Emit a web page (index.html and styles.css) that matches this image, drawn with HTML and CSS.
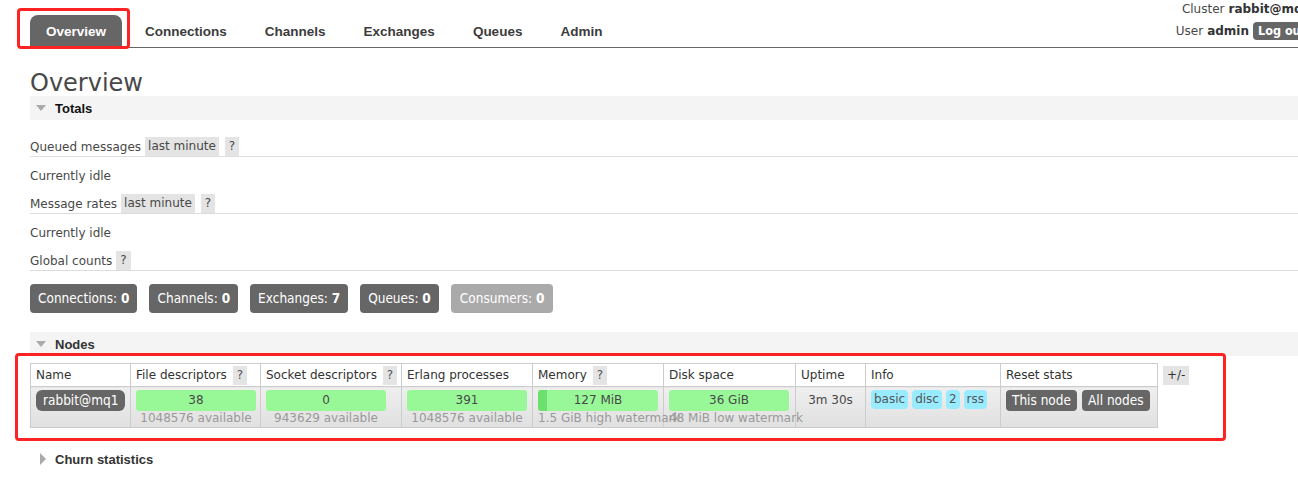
FILE: index.html
```html
<!DOCTYPE html>
<html lang="en">
<head>
<meta charset="utf-8">
<title>RabbitMQ Management</title>
<link rel="stylesheet" href="styles.css">
</head>
<body>
<div class="page">
  <header class="top">
    <nav class="tabs">
      <a class="tab active">Overview</a>
      <a class="tab">Connections</a>
      <a class="tab">Channels</a>
      <a class="tab">Exchanges</a>
      <a class="tab">Queues</a>
      <a class="tab">Admin</a>
    </nav>
    <div class="login">
      <div class="login-line">Cluster <b class="strong">rabbit@mq1</b></div>
      <div class="login-line second">User <b class="strong">admin</b> <span class="logout">Log out</span></div>
    </div>
  </header>

  <main class="main">
    <h1 class="title">Overview</h1>

    <section class="section">
      <h2 class="section-head"><span class="tri-down"></span>Totals</h2>
      <div class="stat-row first">Queued messages <span class="tag">last minute</span><span class="help">?</span></div>
      <p class="idle">Currently idle</p>
      <div class="stat-row">Message rates <span class="tag">last minute</span><span class="help">?</span></div>
      <p class="idle">Currently idle</p>
      <div class="stat-row">Global counts <span class="help near">?</span></div>
      <div class="counts">
        <span class="count">Connections: <b>0</b></span>
        <span class="count">Channels: <b>0</b></span>
        <span class="count">Exchanges: <b>7</b></span>
        <span class="count">Queues: <b>0</b></span>
        <span class="count dim">Consumers: <b>0</b></span>
      </div>
    </section>

    <section class="section nodes">
      <h2 class="section-head"><span class="tri-down"></span>Nodes</h2>
      <div class="nodes-wrap">
        <table class="nodes-table">
          <thead>
            <tr>
              <th class="c-name">Name</th>
              <th class="c-fd">File descriptors <span class="help th-help">?</span></th>
              <th class="c-sd">Socket descriptors <span class="help th-help">?</span></th>
              <th class="c-ep">Erlang processes</th>
              <th class="c-mem">Memory <span class="help th-help">?</span></th>
              <th class="c-disk">Disk space</th>
              <th class="c-up">Uptime</th>
              <th class="c-info">Info</th>
              <th class="c-reset">Reset stats</th>
            </tr>
          </thead>
          <tbody>
            <tr>
              <td><span class="node-name">rabbit@mq1</span></td>
              <td><div class="bar">38</div><div class="sub">1048576 available</div></td>
              <td><div class="bar">0</div><div class="sub">943629 available</div></td>
              <td><div class="bar">391</div><div class="sub">1048576 available</div></td>
              <td><div class="bar bar-mem">127 MiB</div><div class="sub">1.5 GiB high watermark</div></td>
              <td><div class="bar">36 GiB</div><div class="sub">48 MiB low watermark</div></td>
              <td class="uptime">3m 30s</td>
              <td><span class="info-tag">basic</span><span class="info-tag">disc</span><span class="info-tag">2</span><span class="info-tag">rss</span></td>
              <td><span class="btn">This node</span><span class="btn">All nodes</span></td>
            </tr>
          </tbody>
        </table>
        <span class="plusminus">+/-</span>
      </div>
    </section>

    <h2 class="section-head plain"><span class="tri-right"></span>Churn statistics</h2>
  </main>

  <div class="redbox redbox-tab"></div>
  <div class="redbox redbox-nodes"></div>
</div>
</body>
</html>
```

FILE: styles.css
```css
html, body {
  margin: 0;
  padding: 0;
  overflow: hidden;
  background: #fff;
}

body {
  font-family: "DejaVu Sans", Verdana, sans-serif;
  font-size: 12px;
  color: #484848;
}

.page {
  width: 1311px;
  position: relative;
  min-height: 479px;
}

/* ---------- header ---------- */
.top {
  display: flex;
  margin-left: 30px;
  height: 47px;
  border-bottom: 1px solid #666;
}

.tabs {
  display: flex;
  align-self: flex-end;
  gap: 8px;
}

.tab {
  display: block;
  height: 32px;
  line-height: 34px;
  padding: 0 15px;
  font-family: "Liberation Sans", Arial, sans-serif;
  font-weight: bold;
  font-size: 13.5px;
  color: #3c3c3c;
  border-radius: 8px 8px 0 0;
}

.tab.active {
  background: #666;
  color: #fff;
  padding: 0 16px;
}

.login {
  margin-left: auto;
  display: flex;
  flex-direction: column;
  align-items: flex-end;
}

.login-line {
  height: 18px;
  line-height: 18px;
  display: flex;
  align-items: center;
  gap: 4px;
}

.login-line.second {
  margin-top: 4px;
}

.strong {
  font-family: "DejaVu Sans", Verdana, sans-serif;
  font-weight: bold;
  font-size: 12px;
  color: #333;
}

.logout {
  background: #666;
  color: #fff;
  height: 18px;
  line-height: 18px;
  padding: 0 5px;
  border-radius: 4px;
  font-family: "DejaVu Sans Condensed", Tahoma, sans-serif;
  font-weight: bold;
  font-size: 12.5px;
}

/* ---------- main ---------- */
.main {
  margin-left: 30px;
}

.title {
  margin: 22px 0 0;
  font-size: 24px;
  font-weight: normal;
  line-height: 26px;
  color: #484848;
}

.section-head {
  margin: 0;
  height: 24px;
  background: #f4f4f4;
  display: flex;
  align-items: center;
  padding-left: 6px;
  font-family: "Liberation Sans", Arial, sans-serif;
  font-weight: bold;
  font-size: 13px;
  color: #111;
}

.nodes .section-head {
  color: #333;
}

.tri-down {
  width: 0;
  height: 0;
  border-left: 5px solid transparent;
  border-right: 5px solid transparent;
  border-top: 6px solid #aaa;
  margin-right: 9px;
}

.tri-right {
  width: 0;
  height: 0;
  border-top: 6px solid transparent;
  border-bottom: 6px solid transparent;
  border-left: 6px solid #aaa;
  margin-right: 9px;
}

.section-head.plain {
  background: none;
  margin-top: 19px;
  padding-left: 10px;
  color: #333;
}

.stat-row {
  display: flex;
  align-items: center;
  height: 19px;
  border-bottom: 1px solid #ddd;
}

.stat-row.first {
  margin-top: 17px;
}

.tag {
  background: #e4e4e4;
  height: 19px;
  line-height: 19px;
  padding: 0 3px;
  margin-left: 4px;
}

.help {
  background: #e4e4e4;
  height: 19px;
  line-height: 19px;
  padding: 0 4px;
  margin-left: 6px;
}

.help.near {
  margin-left: 4px;
}

.idle {
  margin: 9px 0 8px;
  line-height: 20px;
}

.counts {
  display: flex;
  gap: 12px;
  margin-top: 13px;
}

.count {
  height: 29px;
  line-height: 29px;
  padding: 0 8px;
  background: #666;
  color: #fff;
  border-radius: 4px;
  font-family: "DejaVu Sans Condensed", Tahoma, sans-serif;
  font-size: 13.5px;
}

.count.dim {
  background: #aaa;
  padding: 0 9px;
}

/* ---------- nodes ---------- */
.section.nodes {
  margin-top: 19px;
}

.nodes-wrap {
  display: flex;
  align-items: flex-start;
  gap: 5px;
  margin-top: 7px;
}

.nodes-table {
  border-collapse: collapse;
  table-layout: fixed;
  width: 1127px;
  border: 1px solid #ccc;
}

.nodes-table th,
.nodes-table td {
  border: 1px solid #ccc;
}

.nodes-table th {
  box-sizing: border-box;
  height: 23px;
  padding: 0 5px;
  text-align: left;
  font-weight: normal;
  color: #333;
  background: #fff;
  white-space: nowrap;
}

.th-help {
  display: inline-block;
  margin-left: 2px;
  color: #555;
}

.c-name { width: 100px; }
.c-fd { width: 130px; }
.c-sd { width: 141px; }
.c-ep { width: 131px; }
.c-mem { width: 131px; }
.c-disk { width: 132px; }
.c-up { width: 70px; }
.c-info { width: 135px; }
.c-reset { width: 157px; }

.nodes-table td {
  height: 35px;
  padding: 3px 5px 2px;
  vertical-align: top;
  background: linear-gradient(#efefef, #e0e0e0);
  white-space: nowrap;
}

.bar {
  width: 120px;
  height: 21px;
  line-height: 21px;
  background: #98f898;
  border-radius: 3px;
  text-align: center;
  color: #484848;
}

.bar-mem {
  background: linear-gradient(to right, #6ce06c 9px, #98f898 9px);
}

.sub {
  width: 120px;
  line-height: 14px;
  color: #999;
  text-align: center;
  white-space: nowrap;
}

.nodes-table td.uptime {
  text-align: center;
  line-height: 21px;
  color: #484848;
}

.node-name {
  display: inline-block;
  height: 21px;
  line-height: 21px;
  padding: 0 7px;
  background: #666;
  color: #fff;
  border-radius: 6px;
  font-family: "DejaVu Sans Condensed", Tahoma, sans-serif;
  font-size: 13.5px;
}

.info-tag {
  display: inline-block;
  height: 19px;
  line-height: 19px;
  padding: 0 3px;
  margin-right: 4px;
  background: #99ebff;
  color: #555;
  border-radius: 4px;
}

.btn {
  display: inline-block;
  height: 21px;
  line-height: 21px;
  padding: 0 6px;
  margin-right: 5px;
  background: #666;
  color: #fff;
  border-radius: 4px;
  font-family: "DejaVu Sans Condensed", Tahoma, sans-serif;
  font-size: 13.5px;
}

.plusminus {
  margin-top: 3px;
  height: 19px;
  line-height: 19px;
  padding: 0 4px;
  background: #e4e4e4;
  color: #333;
}

/* ---------- annotation boxes ---------- */
.redbox {
  position: absolute;
  box-sizing: border-box;
  border: 3px solid #ff2222;
  border-radius: 4px;
  pointer-events: none;
}

.redbox-tab {
  left: 17px;
  top: 8px;
  width: 113px;
  height: 41px;
}

.redbox-nodes {
  left: 15px;
  top: 353px;
  width: 1211px;
  height: 88px;
}
```
